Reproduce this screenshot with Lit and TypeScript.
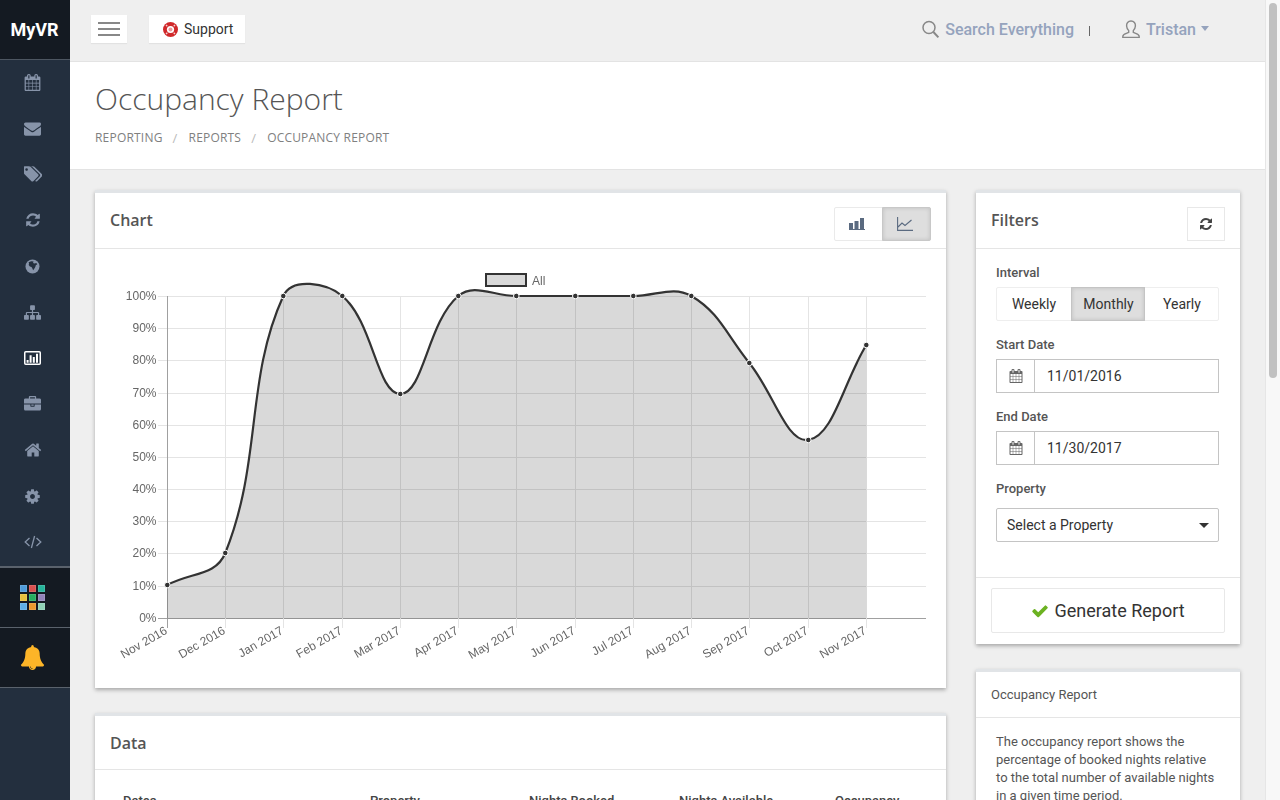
import { LitElement, html, css, svg } from "lit";
import { customElement } from "lit/decorators.js";

const P = {
  calendar: "M192 1664h288v-288h-288v288zm352 0h320v-288h-320v288zm-352-352h288v-320h-288v320zm352 0h320v-320h-320v320zm-352-384h288v-288h-288v288zm736 736h320v-288h-320v288zm-384-736h320v-288h-320v288zm768 736h288v-288h-288v288zm-384-352h320v-320h-320v320zm-352-864v-288q0-13-9.5-22.5t-22.5-9.5h-64q-13 0-22.5 9.5t-9.5 22.5v288q0 13 9.5 22.5t22.5 9.5h64q13 0 22.5-9.5t9.5-22.5zm736 864h288v-320h-288v320zm-384-384h320v-288h-320v288zm384 0h288v-288h-288v288zm32-480v-288q0-13-9.5-22.5t-22.5-9.5h-64q-13 0-22.5 9.5t-9.5 22.5v288q0 13 9.5 22.5t22.5 9.5h64q13 0 22.5-9.5t9.5-22.5zm384-64v1280q0 52-38 90t-90 38h-1408q-52 0-90-38t-38-90v-1280q0-52 38-90t90-38h128v-96q0-66 47-113t113-47h64q66 0 113 47t47 113v96h384v-96q0-66 47-113t113-47h64q66 0 113 47t47 113v96h128q52 0 90 38t38 90z",
  envelope: "M1792 710v794q0 66-47 113t-113 47h-1472q-66 0-113-47t-47-113v-794q44 49 101 87 362 246 497 345 57 42 92.5 65.5t94.5 48 110 24.5h2q51 0 110-24.5t94.5-48 92.5-65.5q170-123 498-345 57-39 100-87zm0-294q0 79-49 151t-122 123q-376 261-468 325-10 7-42.5 30.5t-54 38-52 32.5-57.5 27-50 9h-2q-23 0-50-9t-57.5-27-52-32.5-54-38-42.5-30.5q-91-64-262-182.5t-205-142.5q-62-42-117-115.5t-55-136.5q0-78 41.5-130t118.5-52h1472q65 0 112.5 47t47.5 113z",
  tags: "M384 448q0-53-37.5-90.5t-90.5-37.5-90.5 37.5-37.5 90.5 37.5 90.5 90.5 37.5 90.5-37.5 37.5-90.5zm1067 576q0 53-37 90l-491 492q-39 37-91 37-53 0-90-37l-715-716q-38-37-64.5-101t-26.5-117v-416q0-52 38-90t90-38h416q53 0 117 26.5t102 64.5l715 714q37 39 37 91zm384 0q0 53-37 90l-491 492q-39 37-91 37-36 0-59-14t-53-45l470-470q37-37 37-90 0-52-37-91l-715-714q-38-38-102-64.5t-117-26.5h224q53 0 117 26.5t102 64.5l715 714q37 39 37 91z",
  refresh: "M1639 1056q0 5-1 7-64 268-268 434.5t-478 166.5q-146 0-282.5-55t-243.5-157l-129 129q-19 19-45 19t-45-19-19-45v-448q0-26 19-45t45-19h448q26 0 45 19t19 45-19 45l-137 137q71 66 161 102t187 36q134 0 250-65t186-179q11-17 53-117 8-23 30-23h192q13 0 22.5 9.5t9.5 22.5zm25-800v448q0 26-19 45t-45 19h-448q-26 0-45-19t-19-45 19-45l138-138q-148-137-349-137-134 0-250 65t-186 179q-11 17-53 117-8 23-30 23h-199q-13 0-22.5-9.5t-9.5-22.5v-7q65-268 270-434.5t480-166.5q146 0 284 55.5t245 156.5l130-129q19-19 45-19t45 19 19 45z",
  sitemap: "M1792 1248v320q0 40-28 68t-68 28h-320q-40 0-68-28t-28-68v-320q0-40 28-68t68-28h96v-192h-512v192h96q40 0 68 28t28 68v320q0 40-28 68t-68 28h-320q-40 0-68-28t-28-68v-320q0-40 28-68t68-28h96v-192h-512v192h96q40 0 68 28t28 68v320q0 40-28 68t-68 28h-320q-40 0-68-28t-28-68v-320q0-40 28-68t68-28h96v-192q0-52 38-90t90-38h512v-192h-96q-40 0-68-28t-28-68v-320q0-40 28-68t68-28h320q40 0 68 28t28 68v320q0 40-28 68t-68 28h-96v192h512q52 0 90 38t38 90v192h96q40 0 68 28t28 68z",
  briefcase: "M640 256h512v-128h-512v128zm1152 640v480q0 66-47 113t-113 47h-1472q-66 0-113-47t-47-113v-480h672v160q0 26 19 45t45 19h320q26 0 45-19t19-45v-160h672zm-768 0v128h-256v-128h256zm768-480v384h-1792v-384q0-66 47-113t113-47h352v-160q0-40 28-68t68-28h576q40 0 68 28t28 68v160h352q66 0 113 47t47 113z",
  home: "M1472 992v480q0 26-19 45t-45 19h-384v-384h-256v384h-384q-26 0-45-19t-19-45v-480q0-1 .5-3t.5-3l575-474 575 474q1 2 1 6zm223-69l-62 74q-8 9-21 11h-3q-13 0-21-7l-692-577-692 577q-12 8-24 7-13-2-21-11l-62-74q-8-10-7-23.5t11-21.5l719-599q32-26 76-26t76 26l244 204v-195q0-14 9-23t23-9h192q14 0 23 9t9 23v408l219 182q10 8 11 21.5t-7 23.5z",
  cog: "M1152 896q0-106-75-181t-181-75-181 75-75 181 75 181 181 75 181-75 75-181zm512-109v222q0 12-8 23t-20 13l-185 28q-19 54-39 91 35 50 107 138 10 12 10 25t-9 23q-27 37-99 108t-94 71q-12 0-26-9l-138-108q-44 23-91 38-16 136-29 186-7 28-36 28h-222q-14 0-24.5-8.5t-11.5-21.5l-28-184q-49-16-90-37l-141 107q-10 9-25 9-14 0-25-11-126-114-165-168-7-10-7-23 0-12 8-23 15-21 51-66.5t54-70.5q-27-50-41-99l-183-27q-13-2-21-12.5t-8-23.5v-222q0-12 8-23t19-13l186-28q14-46 39-92-40-57-107-138-10-12-10-24 0-10 9-23 26-36 98.5-107.5t94.5-71.5q13 0 26 10l138 107q44-23 91-38 16-136 29-186 7-28 36-28h222q14 0 24.5 8.5t11.5 21.5l28 184q49 16 90 37l142-107q9-9 24-9 13 0 25 10 129 119 165 170 7 8 7 22 0 12-8 23-15 21-51 66.5t-54 70.5q26 50 41 98l183 28q13 2 21 12.5t8 23.5z",
  check: "M1671 566q0 40-28 68l-724 724-136 136q-28 28-68 28t-68-28l-136-136-362-362q-28-28-28-68t28-68l136-136q28-28 68-28t68 28l294 295 656-657q28-28 68-28t68 28l136 136q28 28 28 68z",
  bell: "M912 1696q0-16-16-16-59 0-101.5-42.5t-42.5-101.5q0-16-16-16t-16 16q0 73 51.5 124.5t124.5 51.5q16 0 16-16zm816-288q0 52-38 90t-90 38h-448q0 106-75 181t-181 75-181-75-75-181h-448q-52 0-90-38t-38-90q50-42 91-88t85-119.5 74.5-158.5 50-206 19.5-260q0-152 117-282.5t307-158.5q-8-19-8-39 0-40 28-68t68-28 68 28 28 68q0 20-8 39 190 28 307 158.5t117 282.5q0 139 19.5 260t50 206 74.5 158.5 85 119.5 91 88z",
};

const fa = (d: string, size: number) =>
  html`<svg class="ic" width=${size} height=${size} viewBox="0 0 1792 1792"><path fill="currentColor" d=${d}></path></svg>`;

const globe = html`<svg class="ic" width="15" height="15" viewBox="0 0 15 15">
  <circle cx="7.5" cy="7.5" r="7" fill="currentColor"></circle>
  <path fill="#232f3e" d="M3.6 3.2l2.6-1 2.4.4-.6 1.4 1.4.6 2-.6.9 1.6-1.4.5-.6 1.8-1.2 2-1 1.3-.7-1.7-.9-1.6-1.6-.4-1.2-1.5.3-1.6z"></path>
</svg>`;
const codeIcon = html`<svg class="ic" width="18" height="14" viewBox="0 0 18 14" fill="none" stroke="currentColor" stroke-width="1.3">
  <path d="M5.5 3L1.2 7l4.3 4M12.5 3l4.3 4-4.3 4M10.6 1L7.4 13"></path>
</svg>`;
const reportIcon = html`<svg class="ic" width="17" height="14" viewBox="0 0 17 14">
  <rect x=".75" y=".75" width="15.5" height="12.5" rx="1" fill="none" stroke="#fff" stroke-width="1.5"></rect>
  <path fill="#fff" d="M2.6 9h2v2.8h-2zM5.6 4.2h2v7.6h-2zM8.800 6h2v5.800h-2zM12 2.800h2v9h-2z"></path>
</svg>`;

const navIcons = [
  fa(P.calendar, 17), fa(P.envelope, 17), fa(P.tags, 18), fa(P.refresh, 16), globe,
  fa(P.sitemap, 17), reportIcon, fa(P.briefcase, 17), fa(P.home, 18), fa(P.cog, 17), codeIcon,
];
const active = 6;
const tiles = ["#4f9bd9", "#d9504f", "#27b39a", "#e8c13e", "#27ae60", "#9183b8", "#5fb0e5", "#ea9a2e", "#8fd0b5"];

/* Chart geometry */
const xs = [167, 225, 283, 342, 400, 458, 516, 575, 633, 691, 749, 808, 866];
const pts = [585, 553, 296, 296, 394, 296, 296, 296, 296, 296, 363, 440, 345].map((y, i) => [xs[i] + 0.3, y] as const);
const months = ["Nov 2016", "Dec 2016", "Jan 2017", "Feb 2017", "Mar 2017", "Apr 2017", "May 2017", "Jun 2017", "Jul 2017", "Aug 2017", "Sep 2017", "Oct 2017", "Nov 2017"];
const rows = [100, 90, 80, 70, 60, 50, 40, 30, 20, 10, 0];
const rowYs = [296, 328, 360, 393, 425, 457, 489, 521, 553, 586, 618];
const rowY = (i: number) => rowYs[i] + 0.5;

function curve(): string {
  const t = 0.4;
  const cps = pts.map((p, i) => {
    const a = pts[i - 1] ?? p, b = pts[i + 1] ?? p;
    const d1 = Math.hypot(p[0] - a[0], p[1] - a[1]);
    const d2 = Math.hypot(b[0] - p[0], b[1] - p[1]);
    const s1 = d1 / (d1 + d2), s2 = d2 / (d1 + d2);
    return {
      px: p[0] - t * s1 * (b[0] - a[0]), py: p[1] - t * s1 * (b[1] - a[1]),
      nx: p[0] + t * s2 * (b[0] - a[0]), ny: p[1] + t * s2 * (b[1] - a[1]),
    };
  });
  let d = `M${pts[0][0]} ${pts[0][1]}`;
  for (let i = 1; i < pts.length; i++) {
    d += `C${cps[i - 1].nx} ${cps[i - 1].ny} ${cps[i].px} ${cps[i].py} ${pts[i][0]} ${pts[i][1]}`;
  }
  return d;
}
const line = curve();
const area = `${line}L${pts[12][0]} 618.5L${pts[0][0]} 618.5Z`;

@customElement("occupancy-chart")
class OccupancyChart extends LitElement {
  static styles = css`
    :host { display: block; }
    svg { display: block; will-change: transform; }
    text { font-family: "Liberation Sans", Arial, sans-serif; font-size: 12px; fill: #666; }
    .grid { stroke: #e4e4e4; stroke-width: 1; shape-rendering: crispEdges; }
    .axis { stroke: #a0a0a0; stroke-width: 1; shape-rendering: crispEdges; }
  `;
  render() {
    return html`<svg width="851" height="439" viewBox="95 249 851 439">
      ${rows.map((v, i) => svg`
        <line class=${v === 0 ? "axis" : "grid"} x1="158" x2="926" y1=${rowY(i)} y2=${rowY(i)}></line>
        <text x="156.500" y=${rowYs[i] + 4} text-anchor="end">${v}%</text>`)}
      ${xs.map((x, i) => svg`
        <line class=${i === 0 ? "axis" : "grid"} x1=${x + 0.5} x2=${x + 0.5} y1="296" y2="628"></line>
        <text text-anchor="end" transform=${`translate(${x + 1} 633) rotate(-30)`}>${months[i]}</text>`)}
      <path d=${area} fill="rgba(0,0,0,.15)"></path>
      <path d=${line} fill="none" stroke="#333" stroke-width="2.2"></path>
      ${pts.map((p) => svg`<circle cx=${p[0]} cy=${p[1]} r="2.8" fill="#333" stroke="#fff" stroke-width="1"></circle>`)}
      <rect x="486" y="274" width="40" height="12" fill="#d8d8d8" stroke="#333" stroke-width="2"></rect>
      <text x="532" y="285">All</text>
    </svg>`;
  }
}

@customElement("app-root")
class AppRoot extends LitElement {
  static styles = css`
    :host {
      display: flex; width: 1280px; height: 800px; overflow: hidden; background: #efefef;
      font-family: Roboto, "Liberation Sans", sans-serif; color: #444;
    }
    * { box-sizing: border-box; }
    .ic { display: block; flex: none; }

    .side { width: 70px; flex: none; background: #232f3e; display: flex; flex-direction: column; color: #8794a9; }
    .brand {
      height: 60px; background: #141a22; border-bottom: 1px solid #4d5661; color: #fff;
      font: 700 18px/59px Roboto, sans-serif; text-align: center; padding-right: 1px;
    }
    .navs { margin: -1px 0 1px; }
    .nav { display: flex; align-items: center; justify-content: center; height: 46px; padding-right: 5px; }
    .nav.on { color: #fff; }
    .block { background: #141a22; border-top: 1px solid #5a626c; display: flex; align-items: center; justify-content: center; padding-right: 6px; }
    .apps { height: 61px; border-top-width: 2px; }
    .bell { height: 61px; border-bottom: 1px solid #5a626c; color: #fdb528; padding-right: 6px; }
    .tiles { display: grid; grid-template-columns: repeat(3, 7px); gap: 2px; }
    .tile { height: 7px; border: 1px solid rgba(255,255,255,.12); }

    .main { flex: 1; min-width: 0; display: flex; flex-direction: column; }
    .top {
      height: 62px; flex: none; border-bottom: 1px solid #e3e3e3; display: flex; align-items: center;
      padding: 0 56px 3px 21px;
    }
    .tb { background: #fff; box-shadow: 0 1px 1px rgba(0,0,0,.05); height: 28px; display: flex; align-items: center; }
    .burger { width: 36px; flex-direction: column; justify-content: center; gap: 4px; margin-right: 22px; }
    .burger i { display: block; width: 22px; height: 2px; background: #888; }
    .support { width: 96px; padding-left: 14px; gap: 6px; font-size: 14px; color: #333; }
    .search { margin-left: auto; display: flex; align-items: center; gap: 5px; color: #95a3bd; font-size: 16px; font-weight: 500; }
    .pipe { width: 1px; height: 10px; background: #666; margin: 4px 32px 0 15px; }
    .user { display: flex; align-items: center; gap: 6px; color: #95a3bd; font-size: 16px; font-weight: 500; }
    .caret { width: 0; height: 0; border: 4.5px solid transparent; border-top: 5px solid #95a3bd; border-bottom: 0; margin: 0 0 2px -1px; }

    .head { height: 108px; flex: none; background: #fff; border-bottom: 1px solid #e3e3e3; padding: 17px 25px 0 25px; }
    h1 { margin: 0; font: 300 30px/40px "Open Sans", sans-serif; color: #555; }
    .crumbs {
      display: flex; margin: 11px 0 0; font: 500 12px/16px "Open Sans", sans-serif; letter-spacing: .2px; color: #808080; text-transform: uppercase;
    }
    .crumbs span { margin-left: 10px; margin-right: 11px; color: #bbb; font-weight: 400; font-size: 13px; }

    .body { flex: 1; min-height: 0; display: grid; grid-template-columns: 851px 264px; gap: 30px; padding: 20px 25px 0; align-items: start; }
    .col { display: flex; flex-direction: column; gap: 25px; }
    .panel { background: #fff; border-top: 3px solid #e1e4e7; box-shadow: 0 2px 4px rgba(0,0,0,.3); }
    .ph {
      height: 56px; border-bottom: 1px solid #e5e5e5; display: flex; align-items: center; justify-content: space-between;
      padding: 0 15px; font: 600 16px "Open Sans", sans-serif; color: #555;
    }
    .ph b { font-weight: 600; margin-top: -1px; }
    .ph.data { height: 54px; }
    .ph.data b { margin-top: 1px; }
    .toggle { display: flex; height: 34px; margin-top: 6px; border: 1px solid #eaeaea; border-radius: 2px; }
    .toggle div { display: flex; align-items: center; justify-content: center; color: #5a6a80; }
    .toggle .a { width: 48px; padding-right: 5px; }
    .toggle .b { width: 49px; margin: -1px; padding-right: 3px; background: #dedede; border: 1px solid #c8c8c8; box-shadow: inset 0 0 4px rgba(0,0,0,.14); border-radius: 0 2px 2px 0; }
    .reload { width: 38px; height: 34px; margin-top: 6px; border: 1px solid #e8e8e8; display: flex; align-items: center; justify-content: center; color: #444; }

    .form { padding: 16px 21px 35px 20px; }
    label { display: block; font-size: 13px; line-height: 16px; font-weight: 500; color: #555; margin: 16px 0 6px; }
    label:first-child { margin-top: 0; }
    .seg { display: flex; height: 34px; border: 1px solid #eee; border-radius: 2px; font-size: 14px; color: #333; }
    .seg div { display: flex; align-items: center; justify-content: center; }
    .seg .w { width: 74px; }
    .seg .m { width: 74px; margin: -1px 0; padding-left: 1px; background: #dedede; border: 1px solid #c4c4c4; box-shadow: inset 0 0 4px rgba(0,0,0,.14); }
    .seg .y { flex: 1; padding-left: 1px; }
    .date { display: flex; height: 34px; border: 1px solid #c4c4c4; font-size: 14px; color: #333; }
    .date .add { width: 38px; border-right: 1px solid #c4c4c4; display: flex; align-items: center; justify-content: center; color: #666; }
    .date .v { padding-left: 12px; line-height: 32px; }
    .sel {
      height: 34px; margin-top: 11px; border: 1px solid #c4c4c4; border-radius: 2px; display: flex; align-items: center; justify-content: space-between;
      padding: 0 9px 0 10px; font-size: 14px; color: #333;
    }
    .sel i { width: 0; height: 0; border: 5px solid transparent; border-top: 5px solid #333; border-bottom: 0; }
    .foot { border-top: 1px solid #e5e5e5; padding: 10px 15px 11px; }
    .gen {
      height: 45px; border: 1px solid #e8e8e8; border-radius: 2px; display: flex; align-items: center; justify-content: center; gap: 5px;
      font-size: 18px; color: #333;
    }
    .gen .ic { color: #6cb221; }
    .oh { height: 46px; border-bottom: 1px solid #e5e5e5; padding: 0 15px; font-size: 13px; line-height: 46px; color: #555; }
    .ob { padding: 15px 20px; font-size: 13px; line-height: 18px; color: #555; height: 120px; }

    .thead { display: grid; grid-template-columns: 247px 159px 150px 156px 1fr; padding: 22px 0 0 28px; font-size: 13px; line-height: 18px; font-weight: 500; color: #444; }

    .bar { width: 15px; flex: none; background: #f8f8f8; border-left: 1px solid #e6e6e6; padding: 3px 3px 0 3px; }
    .bar div { width: 8px; height: 375px; border-radius: 4px; background: #c1c1c1; }
  `;

  render() {
    return html`
      <aside class="side">
        <div class="brand">MyVR</div>
        <div class="navs">${navIcons.map((ic, i) => html`<div class="nav ${i === active ? "on" : ""}">${ic}</div>`)}</div>
        <div class="block apps"><div class="tiles">${tiles.map((c) => html`<div class="tile" style="background:${c}"></div>`)}</div></div>
        <div class="block bell">${fa(P.bell, 25)}</div>
      </aside>

      <div class="main">
        <header class="top">
          <div class="tb burger"><i></i><i></i><i></i></div>
          <div class="tb support">
            <svg class="ic" width="15" height="15" viewBox="0 0 15 15">
              <circle cx="7.5" cy="7.5" r="7.5" fill="#d0282a"></circle>
              <circle cx="7.5" cy="7.5" r="3.6" fill="#fff"></circle>
              <circle cx="7.5" cy="7.5" r="2" fill="#ea9c9c"></circle>
              <path stroke="#f6d0d0" stroke-width="1.3" d="M3 3l1.300 1.300M12 3l-1.300 1.300M3 12l1.300-1.300M12 12l-1.300-1.300"></path>
            </svg>
            Support
          </div>
          <div class="search">
            <svg class="ic" width="19" height="20" viewBox="0 0 19 20" fill="none" stroke="#888" stroke-width="1.5">
              <circle cx="8" cy="8.5" r="6"></circle><path d="M12.4 13l5 5.4" stroke-width="2"></path>
            </svg>
            Search Everything
          </div>
          <div class="pipe"></div>
          <div class="user">
            <svg class="ic" width="18" height="19" viewBox="0 0 18 19" fill="none" stroke="#888" stroke-width="1.4">
              <path d="M9 1c-3 0-4.600 2.200-4.400 5 .1 2 1 3.400 2.100 4.600v1.800c-1.600.9-5.900 1.500-5.900 4v1h16.400v-1c0-2.500-4.300-3.100-5.900-4v-1.800c1.100-1.200 2-2.600 2.100-4.600.2-2.800-1.400-5-4.400-5z"></path>
            </svg>
            Tristan
            <div class="caret"></div>
          </div>
        </header>

        <section class="head">
          <h1>Occupancy Report</h1>
          <div class="crumbs">Reporting<span>/</span>Reports<span>/</span>Occupancy Report</div>
        </section>

        <div class="body">
          <div class="col">
            <div class="panel">
              <div class="ph">
                <b>Chart</b>
                <div class="toggle">
                  <div class="a">
                    <svg width="16" height="13" viewBox="0 0 16 13" fill="currentColor"><path d="M0 6h4v6H0zM5.500 4H9.500v8H5.500zM11 1h4v11h-4zM0 12h16v1H0z"></path></svg>
                  </div>
                  <div class="b">
                    <svg width="16" height="14" viewBox="0 0 16 14" fill="none" stroke="currentColor" stroke-width="1.100"><path d="M.6 0v13.400H16M1 10l4-4 3 2.500L14.500 3"></path></svg>
                  </div>
                </div>
              </div>
              <occupancy-chart></occupancy-chart>
            </div>
            <div class="panel">
              <div class="ph data"><b>Data</b></div>
              <div class="thead"><div>Dates</div><div>Property</div><div>Nights Booked</div><div>Nights Available</div><div>Occupancy</div></div>
            </div>
          </div>

          <div class="col">
            <div class="panel">
              <div class="ph">
                <b>Filters</b>
                <div class="reload">${fa(P.refresh, 14)}</div>
              </div>
              <div class="form">
                <label>Interval</label>
                <div class="seg"><div class="w">Weekly</div><div class="m">Monthly</div><div class="y">Yearly</div></div>
                <label>Start Date</label>
                <div class="date"><div class="add">${fa(P.calendar, 14)}</div><div class="v">11/01/2016</div></div>
                <label>End Date</label>
                <div class="date"><div class="add">${fa(P.calendar, 14)}</div><div class="v">11/30/2017</div></div>
                <label>Property</label>
                <div class="sel">Select a Property<i></i></div>
              </div>
              <div class="foot"><div class="gen">${fa(P.check, 18)}Generate Report</div></div>
            </div>
            <div class="panel">
              <div class="oh">Occupancy Report</div>
              <div class="ob">The occupancy report shows the percentage of booked nights relative to the total number of available nights in a given time period.</div>
            </div>
          </div>
        </div>
      </div>

      <div class="bar"><div></div></div>
    `;
  }
}
